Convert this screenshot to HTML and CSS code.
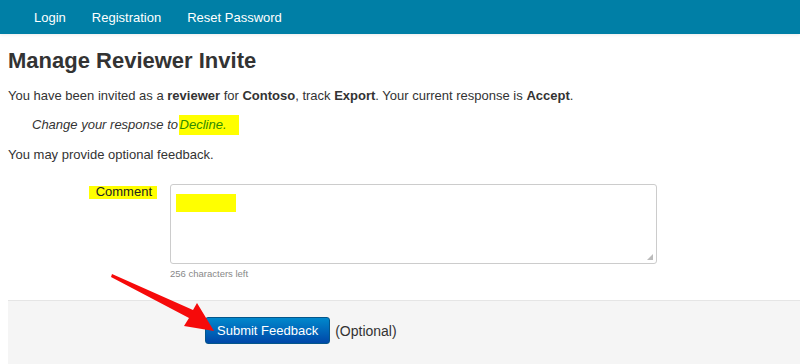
FILE: index.html
```html
<!DOCTYPE html>
<html lang="en">
<head>
  <meta charset="UTF-8">
  <title>Manage Reviewer Invite</title>
  <link rel="stylesheet" href="styles.css">
</head>
<body>
  <!-- Top navigation -->
  <div class="navbar">
    <a href="#">Login</a>
    <a href="#">Registration</a>
    <a href="#">Reset Password</a>
  </div>

  <div class="content">
    <h1>Manage Reviewer Invite</h1>
    <p class="intro">You have been invited as a <b>reviewer</b> for <b>Contoso</b>, track <b>Export</b>. Your current response is <b>Accept</b>.</p>
    <p class="change">Change your response to <a href="#" class="mark">Decline.</a></p>
    <p class="intro">You may provide optional feedback.</p>

    <!-- Comment field -->
    <div class="form-row">
      <label class="form-label"><span class="mark">Comment</span></label>
      <div class="form-field">
        <div class="textarea">
          <div class="mark-box"></div>
          <span class="grip"></span>
        </div>
        <div class="help">256 characters left</div>
      </div>
    </div>

    <!-- Actions -->
    <div class="form-actions">
      <button class="btn">Submit Feedback</button>
      <span class="optional">(Optional)</span>
    </div>
  </div>

  <svg class="arrow" width="800" height="364" viewBox="0 0 800 364">
    <polygon points="112,274 193,310 197,303 214,331 184,326 189,318 111,277" fill="#f60a0a"/>
  </svg>
</body>
</html>
```

FILE: styles.css
```css
body {
  margin: 0;
  font-family: "Liberation Sans", Arial, sans-serif;
  font-size: 13px;
  color: #333;
  background-color: #fff;
}

/* Navbar */
.navbar {
  height: 34px;
  background-color: #007fa6;
  display: flex;
  align-items: center;
  padding-left: 34px;
  gap: 26px;
  box-shadow: 0 1px 3px rgba(0, 0, 0, 0.08);
}

.navbar a {
  color: #fff;
  font-size: 13px;
  text-decoration: none;
}

.content {
  padding-left: 8px;
}

h1 {
  font-size: 22px;
  font-weight: bold;
  color: #333;
  margin: 15px 0 14px;
  line-height: 24px;
}

.intro {
  margin: 0 0 10px;
  line-height: 18px;
}

.change {
  margin: 0 0 11px;
  padding-left: 24px;
  font-style: italic;
  line-height: 20px;
}

.mark {
  background-color: #ffff00;
}

.change a {
  display: inline-block;
  color: #2e8b00;
  text-decoration: none;
  width: 59px;
  height: 20px;
  line-height: 20px;
  margin-left: -3px;
  padding-left: 1px;
}

.form-row {
  display: flex;
  margin-top: 20px;
}

.form-label {
  width: 149px;
  text-align: right;
  padding-right: 13px;
  color: #222;
}

.form-label .mark {
  display: inline-block;
  height: 13px;
  line-height: 11px;
  padding: 0 5px 0 7px;
}

.textarea {
  position: relative;
  width: 485px;
  height: 78px;
  border: 1px solid #ccc;
  border-radius: 3px;
}

.mark-box {
  width: 60px;
  height: 18px;
  margin: 9px 0 0 5px;
  background-color: #ffff00;
}

.grip {
  position: absolute;
  right: 3px;
  bottom: 3px;
  width: 6px;
  height: 6px;
  background:
    radial-gradient(circle, #bbb 0.8px, transparent 1px) 0 0 / 2px 2px;
  clip-path: polygon(100% 0, 100% 100%, 0 100%);
}

.help {
  font-size: 9.5px;
  color: #888;
  margin-top: 4px;
}

.form-actions {
  box-sizing: border-box;
  margin-top: 21px;
  height: 64px;
  background-color: #f5f5f5;
  border-top: 1px solid #e5e5e5;
  display: flex;
  align-items: center;
  padding-left: 197px;
  gap: 5px;
  padding-bottom: 4px;
}

.btn {
  font-family: "Liberation Sans", Arial, sans-serif;
  font-size: 13px;
  color: #fff;
  height: 27px;
  padding: 0 11px;
  border: 1px solid #04568a;
  border-radius: 3px;
  background-image: linear-gradient(#0088cc, #0047a8);
}

.optional {
  font-size: 14px;
  color: #333;
}

.arrow {
  position: absolute;
  top: 0;
  left: 0;
  pointer-events: none;
}
```
